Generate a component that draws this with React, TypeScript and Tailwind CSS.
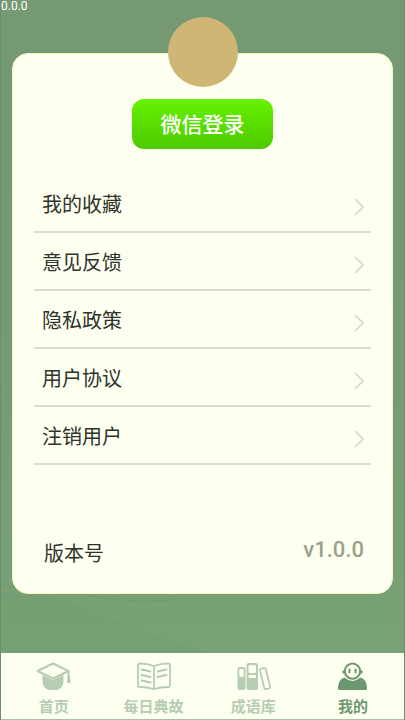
import type { ReactNode } from "react";

interface MenuRowProps {
  label: string;
}

interface TabProps {
  label: string;
  active?: boolean;
  children: ReactNode;
}

const menuItems = ["我的收藏", "意见反馈", "隐私政策", "用户协议", "注销用户"];

const CapIcon = () => (
  <svg viewBox="0 0 36 28" className="w-9 h-7" fill="none" aria-hidden="true">
    <path d="M6.5 13v7a8 8 0 0 0 8 8h5a8 8 0 0 0 8-8v-7L17 18z" fill="currentColor" />
    <path
      d="M17 1.5 32.500 9 17 16.500 1.500 9z"
      fill="#fdfff1"
      stroke="currentColor"
      strokeWidth="2"
      strokeLinejoin="round"
    />
    <path d="M32.5 9v6" stroke="currentColor" strokeWidth="2" />
    <path d="M31.500 14h2.500l.5 7h-3.500z" fill="currentColor" />
  </svg>
);

const BookIcon = () => (
  <svg
    viewBox="0 0 36 28"
    className="w-9 h-7"
    fill="none"
    stroke="currentColor"
    strokeWidth="1.8"
    strokeLinecap="round"
    strokeLinejoin="round"
    aria-hidden="true"
  >
    <path d="M18 4C13 2 8 1.500 3.500 1.500Q2 1.500 2 3v20.500q0 1.500 1.500 1.500C8 25 13 25.500 18 27c5-1.500 10-2 14.500-2q1.500 0 1.500-1.500V3q0-1.500-1.500-1.500C28 1.500 23 2 18 4z" />
    <path d="M18 4v23" />
    <path d="m5.500 7.500 9 2M5.500 13l9 2M5.500 18.500l9 2M21.500 9.500l9-2M21.500 15l9-2" />
  </svg>
);

const ShelfIcon = () => (
  <svg viewBox="0 0 36 28" className="w-9 h-7" fill="none" aria-hidden="true">
    <rect x="2.500" y="5" width="8" height="23" rx="2" fill="currentColor" />
    <rect x="4.300" y="7" width="4.400" height="8" rx="1" fill="#fdfff1" />
    <rect x="11.500" y="1" width="11.500" height="27" rx="2" fill="currentColor" />
    <rect x="13.500" y="3" width="7.500" height="8" rx="1.500" fill="#fdfff1" />
    <rect x="13.500" y="13" width="7.500" height="3" rx="1" fill="#fdfff1" />
    <rect
      x="27"
      y="6"
      width="6"
      height="21"
      rx="1.500"
      stroke="currentColor"
      strokeWidth="1.800"
      transform="rotate(-14 30 16.500)"
    />
  </svg>
);

const MonkIcon = () => (
  <svg viewBox="0 0 36 28" className="w-9 h-7" fill="none" aria-hidden="true">
    <path d="M3 26.500C3 20 6 15.500 11 15.500h13c5 0 8 4.500 8 11q0 1.500-1.500 1.500h-26q-1.500 0-1.500-1.500z" fill="currentColor" />
    <circle cx="17.500" cy="9" r="10" fill="#fdfff1" />
    <circle cx="9" cy="10" r="1.800" fill="currentColor" />
    <circle cx="26" cy="10" r="1.800" fill="currentColor" />
    <circle cx="17.500" cy="9.200" r="7.600" fill="#fdfff1" stroke="currentColor" strokeWidth="2" />
    <path d="M14.500 7.500v3M20.500 7.500v3" stroke="currentColor" strokeWidth="2" strokeLinecap="round" />
  </svg>
);

const Chevron = () => (
  <svg
    viewBox="0 0 10 18"
    className="w-[10px] h-[18px] text-[#d5dac0]"
    fill="none"
    stroke="currentColor"
    strokeWidth="1.600"
    aria-hidden="true"
  >
    <path d="m1 1 8 8-8 8" />
  </svg>
);

const MenuRow = ({ label }: MenuRowProps) => (
  <li className="border-b-2 border-[#dadecb]">
    <button className="w-full h-14 pt-[3px] pl-2 pr-[7px] flex items-center justify-between text-left">
      <span className="text-xl">{label}</span>
      <span className="pt-1">
        <Chevron />
      </span>
    </button>
  </li>
);

const Tab = ({ label, active = false, children }: TabProps) => (
  <a
    href="#"
    aria-current={active ? "page" : undefined}
    className={`flex-1 flex flex-col items-center gap-[7px] ${active ? "text-[#6c9870]" : "text-[#b7cdb3]"}`}
  >
    {children}
    <span className="text-[15px] leading-5 font-bold">{label}</span>
  </a>
);

// faint ink-wash hills along the bottom of the page
const Landscape = () => (
  <svg
    viewBox="0 0 405 300"
    preserveAspectRatio="none"
    className="absolute inset-x-0 bottom-0 w-full h-[300px]"
    fill="none"
    aria-hidden="true"
  >
    <path d="M0 165q30 6 60 8t50 6q40 4 70 0" stroke="#6a9067" strokeOpacity="0.4" />
    <path d="M0 178q30-4 55 2t60 8q50 2 90 10M20 190q40 4 90 2M240 185q60 6 120 0" stroke="#6a9067" strokeOpacity="0.1" />
    <path d="M0 172q60 4 100 22t110 40H0z" fill="#6e9574" fillOpacity="0.12" />
  </svg>
);

const App = () => {
  return (
    <div className="relative min-h-screen flex flex-col border-x border-[#6c8f69] bg-linear-to-b from-[#759972] via-[#759b72] to-[#79a376] font-['Roboto','Noto_Sans_CJK_SC',sans-serif] text-[#2f332b]">
      <Landscape />

      <header className="relative text-xs leading-3 text-white">0.0.0</header>

      <main className="relative flex-1 mt-[41px] mx-[11px] mb-[59px] px-[21px] flex flex-col rounded-2xl border border-[#f4f7b8] bg-[#fdfff1]">
        <div className="size-[70px] -mt-[37px] mx-auto rounded-full bg-[#d0b674]" />
        <button className="mt-3 mx-auto w-[141px] h-[50px] pt-[3px] rounded-xl bg-linear-to-b from-[#67f200] to-[#4dca00] text-[21px] font-medium text-white">
          微信登录
        </button>

        <ul className="mt-[26px]">
          {menuItems.map((item) => (
            <MenuRow key={item} label={item} />
          ))}
        </ul>

        <div className="mt-auto mb-[25px] pl-[10px] pr-[7px] flex justify-between">
          <span className="pt-1 text-xl">版本号</span>
          <span className="text-[22px] leading-7 font-medium text-[#9aa28b]">v1.0.0</span>
        </div>
      </main>

      <nav className="relative pt-[9px] pb-[2px] pl-[3px] pr-px flex border-b border-[#a9c2a4] bg-[#fdfff1]">
        <Tab label="首页">
          <CapIcon />
        </Tab>
        <Tab label="每日典故">
          <BookIcon />
        </Tab>
        <Tab label="成语库">
          <ShelfIcon />
        </Tab>
        <Tab label="我的" active>
          <MonkIcon />
        </Tab>
      </nav>
    </div>
  );
};

export default App;
